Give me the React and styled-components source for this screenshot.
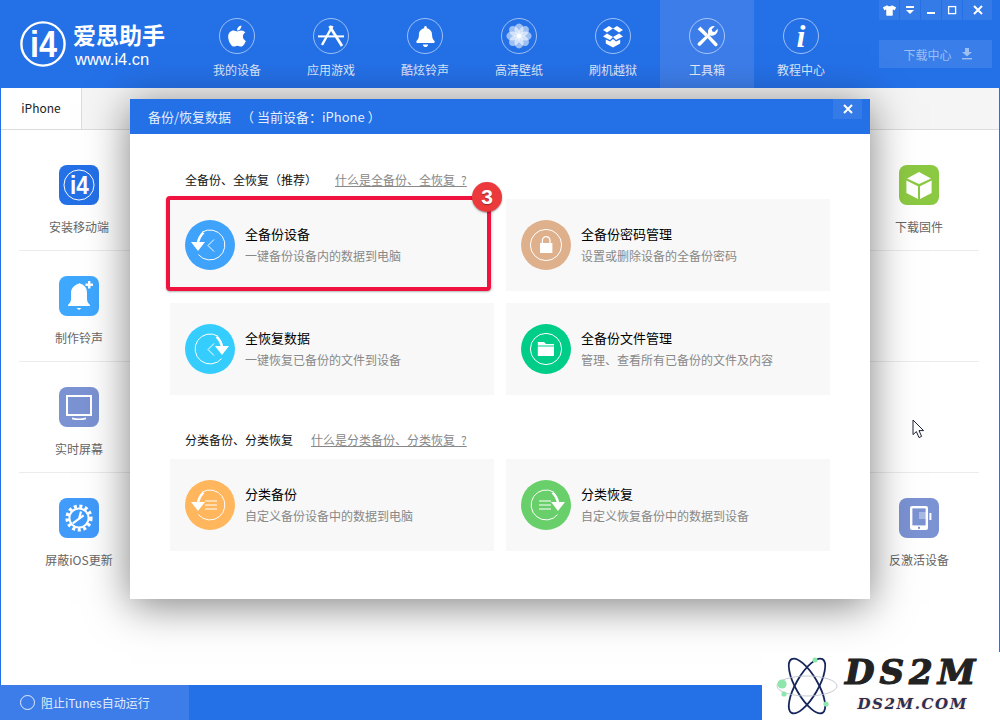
import React from 'react';
import styled, { createGlobalStyle } from 'styled-components';
import { FaApple, FaBell, FaTshirt } from 'react-icons/fa';

const BLUE = '#2470e7';
const LIGHT_BLUE = '#3d7de9';

const GlobalStyle = createGlobalStyle`
  html, body {
    margin: 0;
    padding: 0;
    background: #fff;
  }
  * {
    box-sizing: border-box;
  }
  body {
    font-family: "Noto Sans CJK SC", "Noto Sans", sans-serif;
  }
`;

// small drawings

const I4Mark = ({ size, ring = 2.4 }) => (
  <svg width={size} height={size} viewBox='0 0 46 46'>
    <circle cx='23' cy='23' r='21.6' fill='none' stroke='#fff' strokeWidth={ring} />
    <text
      x='10'
      y='36'
      textLength='27'
      lengthAdjust='spacingAndGlyphs'
      fill='#fff'
      fontFamily='Liberation Sans'
      fontWeight='700'
      fontSize='36'
    >
      i4
    </text>
  </svg>
);

const Flower = () => (
  <svg width='28' height='28' viewBox='0 0 32 32'>
    {[0, 45, 90, 135, 180, 225, 270, 315].map((a) => (
      <ellipse
        key={a}
        cx='16'
        cy='8.6'
        rx='5.2'
        ry='7'
        fill='#fff'
        opacity='0.55'
        transform={`rotate(${a} 16 16)`}
      />
    ))}
    <circle cx='16' cy='16' r='2.6' fill='#fff' />
  </svg>
);

const AppStoreA = () => (
  <svg width='34' height='34' viewBox='1 1 34 34' fill='none' stroke='#fff' strokeWidth='2.4'>
    <path d='M19.5 8 L9 27' />
    <path d='M16.5 8 L29 28' strokeWidth='2.8' />
    <path d='M5 18.4 H31' strokeWidth='2' />
  </svg>
);

const OpenBox = () => (
  <svg width='34' height='34' viewBox='1 1 34 34' fill='#fff'>
    <path d='M8 12 L14 8 L18 10.5 L12 14.5 Z' />
    <path d='M28 12 L22 8 L18 10.5 L24 14.5 Z' />
    <path d='M12 15.4 L18 19 L15 22 L8 18.6 Z' />
    <path d='M24 15.4 L18 19 L21 22 L28 18.6 Z' />
    <path d='M10.8 21.4 L15 23.6 L18 21 L21 23.6 L25.2 21.4 V25.4 L18 29.6 L10.8 25.4 Z' />
  </svg>
);

const Tools = () => (
  <svg width='23' height='23' viewBox='0 0 24 24' fill='#fff'>
    <path d='M4.6 1.6 L9 6 L12.4 9.4 L9.8 12 L6.3 8.5 L1.8 4.4 Z' />
    <path d='M12 13.6 L14.4 11.2 L22 19 A1.7 1.7 0 0 1 19.4 21.6 Z' />
    <path d='M22.6 4 A6 6 0 0 1 14.7 10.9 L5 21.2 A1.9 1.9 0 0 1 2.3 18.5 L12.8 8.9 A6 6 0 0 1 19.6 1.2 L16.4 4.4 L17 6.8 L19.4 7.4 Z' />
  </svg>
);

const BackupRing = ({ flip }) => (
  <g transform={flip ? 'matrix(-1 0 0 1 50 0)' : undefined}>
    <path d='M17 12.2 A15 15 0 1 1 13.4 34.6' fill='none' stroke='#fff' strokeWidth='1' />
    <path d='M13 23 C13.5 19 15 16 18.4 12.6' fill='none' stroke='#fff' strokeWidth='2.6' />
    <path d='M6 22 H20 L13 31 Z' fill='#fff' />
  </g>
);

const Chevron = () => (
  <path d='M29 19.5 L23 25.5 L29 31.5' fill='none' stroke='#fff' strokeWidth='1' />
);

const ListLines = () => (
  <path d='M20 21 H32 M20 25 H32 M20 29 H32' fill='none' stroke='#fff' strokeWidth='1' />
);

const ICONS = {
  backup: (
    <>
      <BackupRing />
      <Chevron />
    </>
  ),
  restore: (
    <>
      <BackupRing flip />
      <Chevron />
    </>
  ),
  partBackup: (
    <>
      <BackupRing />
      <ListLines />
    </>
  ),
  partRestore: (
    <>
      <BackupRing flip />
      <path d='M18 21 H30 M18 25 H30 M18 29 H30' fill='none' stroke='#fff' strokeWidth='1' />
    </>
  ),
  lock: (
    <>
      <circle cx='25' cy='25' r='15.6' fill='none' stroke='#fff' strokeWidth='1' />
      <rect x='19' y='23' width='12.4' height='10' fill='#fff' />
      <path d='M21.4 23 V20.4 A3.8 3.8 0 0 1 29 20.4 V23' fill='none' stroke='#fff' strokeWidth='1.3' />
    </>
  ),
  folder: (
    <>
      <circle cx='25' cy='25' r='15.6' fill='none' stroke='#fff' strokeWidth='1' />
      <path d='M16.8 18 H23 L25 20 H33 V21.6 H16.8 Z M16.8 22.6 H33 V32 H16.8 Z' fill='#fff' />
    </>
  ),
};

const TOOL_ICONS = {
  install: <I4Mark size={32} ring={1.4} />,
  bell: (
    <svg width='32' height='32' viewBox='0 0 32 32' fill='#fff'>
      <path d='M15 4 A2 2 0 0 1 18 4 C22.5 5.4 24 9 24 13 V19 C24 22 25.5 23.5 27 25 V26 H5 V25 C6.5 23.5 8 22 8 19 V13 C8 9 10.5 5.4 15 4 Z' />
      <path d='M13.5 28 H18.5 L16 30 Z' />
      <path d='M25 1 H27.4 V3.6 H30 V6 H27.4 V8.6 H25 V6 H22.4 V3.6 H25 Z' />
    </svg>
  ),
  screen: (
    <svg width='30' height='30' viewBox='0 0 30 30'>
      <rect x='3' y='4' width='24' height='19' fill='none' stroke='#fff' strokeWidth='2' />
      <path d='M8 26.4 C12 27.4 18 27.4 22 26.4' fill='none' stroke='#fff' strokeWidth='1.6' />
    </svg>
  ),
  gear: (
    <svg width='30' height='30' viewBox='0 0 30 30' fill='none' stroke='#fff'>
      <circle cx='15' cy='15' r='11.8' strokeWidth='3.6' strokeDasharray='3 2.56' />
      <circle cx='15' cy='15' r='9.6' strokeWidth='2' />
      <path d='M17 8.5 L15 16 M8.8 20.4 L19.6 12.4' strokeWidth='2.2' />
    </svg>
  ),
  cube: (
    <svg width='28' height='30' viewBox='0 0 28 30' fill='#fff'>
      <path d='M14 2 L26 8.4 L14 14 L2 8.4 Z' />
      <path d='M1.4 10.6 L13 16.2 V29 L1.4 23 Z' />
      <path d='M26.6 10.6 L15 16.2 V29 L26.6 23 Z' />
    </svg>
  ),
  phone: (
    <svg width='30' height='32' viewBox='0 0 30 32'>
      <rect x='6' y='4' width='18' height='24' rx='2' fill='#fff' />
      <rect x='8.4' y='6.4' width='13.2' height='17' fill='#7b92d3' />
      <rect x='15' y='10' width='7' height='7' fill='#fff' opacity='0.35' />
      <rect x='14' y='24.8' width='2' height='2' fill='#7b92d3' />
      <rect x='25.4' y='11' width='2' height='7' fill='#fff' />
    </svg>
  ),
};

const NAV_ITEMS = [
  { label: '我的设备', icon: <FaApple size={24} /> },
  { label: '应用游戏', icon: <AppStoreA /> },
  { label: '酷炫铃声', icon: <FaBell size={21} /> },
  { label: '高清壁纸', icon: <Flower /> },
  { label: '刷机越狱', icon: <OpenBox /> },
  { label: '工具箱', icon: <Tools />, active: true },
  { label: '教程中心', icon: <InfoGlyph>i</InfoGlyph> },
];

const TOOL_ROWS = [
  [
    { label: '安装移动端', icon: 'install', color: BLUE },
    { label: '下载固件', icon: 'cube', color: '#8cc942' },
  ],
  [{ label: '制作铃声', icon: 'bell', color: '#3ea8ff' }, null],
  [{ label: '实时屏幕', icon: 'screen', color: '#7b92d3' }, null],
  [
    { label: '屏蔽iOS更新', icon: 'gear', color: '#419bfb' },
    { label: '反激活设备', icon: 'phone', color: '#7b92d3' },
  ],
];

const FULL_CARDS = [
  { title: '全备份设备', desc: '一键备份设备内的数据到电脑', icon: 'backup', color: '#3fa2fb', marked: true },
  { title: '全备份密码管理', desc: '设置或删除设备的全备份密码', icon: 'lock', color: '#dfb08c' },
  { title: '全恢复数据', desc: '一键恢复已备份的文件到设备', icon: 'restore', color: '#35cdfd' },
  { title: '全备份文件管理', desc: '管理、查看所有已备份的文件及内容', icon: 'folder', color: '#00cd87' },
];

const PART_CARDS = [
  { title: '分类备份', desc: '自定义备份设备中的数据到电脑', icon: 'partBackup', color: '#ffb65c' },
  { title: '分类恢复', desc: '自定义恢复备份中的数据到设备', icon: 'partRestore', color: '#68cf6a' },
];

const BackupCard = ({ card }) => (
  <Card>
    <CardIcon $color={card.color}>
      <svg width='50' height='50' viewBox='0 0 50 50'>
        {ICONS[card.icon]}
      </svg>
    </CardIcon>
    <div>
      <CardTitle>{card.title}</CardTitle>
      <CardDesc>{card.desc}</CardDesc>
    </div>
    {card.marked && (
      <Highlight>
        <StepBadge>3</StepBadge>
      </Highlight>
    )}
  </Card>
);

const Tool = ({ tool }) =>
  tool ? (
    <ToolItem>
      <ToolIcon $color={tool.color}>{TOOL_ICONS[tool.icon]}</ToolIcon>
      <ToolLabel>{tool.label}</ToolLabel>
    </ToolItem>
  ) : (
    <ToolItem />
  );

const App = () => (
  <>
    <GlobalStyle />
    <Window>
      <Header>
        <Logo>
          <I4Mark size={46} />
          <LogoText>
            <LogoName>爱思助手</LogoName>
            <LogoUrl>www.i4.cn</LogoUrl>
          </LogoText>
        </Logo>
        <Nav>
          {NAV_ITEMS.map((item) => (
            <NavItem key={item.label} $active={item.active}>
              <NavCircle>{item.icon}</NavCircle>
              <NavLabel>{item.label}</NavLabel>
            </NavItem>
          ))}
        </Nav>
        <HeaderRight>
          <WindowButtons>
            <WindowButton>
              <FaTshirt size={13} />
            </WindowButton>
            <WindowButton>
              <svg width='10' height='10' viewBox='0 0 10 10' fill='#fff'>
                <rect x='1' y='1' width='8' height='2' />
                <path d='M1 5 H9 L5 9 Z' />
              </svg>
            </WindowButton>
            <WindowButton>
              <svg width='10' height='10' viewBox='0 0 10 10' fill='#fff'>
                <rect x='1' y='7' width='8' height='2' />
              </svg>
            </WindowButton>
            <WindowButton>
              <svg width='10' height='10' viewBox='0 0 10 10' fill='none' stroke='#fff' strokeWidth='1.3'>
                <rect x='1.6' y='1.6' width='7' height='7' />
              </svg>
            </WindowButton>
            <WindowButton $wide>
              <CloseCross />
            </WindowButton>
          </WindowButtons>
          <DownloadButton>
            下载中心
            <svg width='12' height='12' viewBox='0 0 12 12' fill='currentColor'>
              <path d='M4 0 H8 V4 H11 L6 8.6 L1 4 H4 Z' />
              <rect x='1' y='10' width='10' height='1.4' />
            </svg>
          </DownloadButton>
        </HeaderRight>
      </Header>

      <Main>
        <TabBar>
          <Tab>iPhone</Tab>
        </TabBar>
        <ToolBody>
          {TOOL_ROWS.map((row) => (
            <ToolRow key={row[0].label}>
              <Tool tool={row[0]} />
              <Tool tool={row[1]} />
            </ToolRow>
          ))}
        </ToolBody>
      </Main>

      <Footer>
        <FooterToggle>
          <FooterCircle />
          阻止iTunes自动运行
        </FooterToggle>
      </Footer>

      <Modal>
        <ModalHeader>
          备份/恢复数据
          <ModalDevice>（ 当前设备：iPhone ）</ModalDevice>
          <ModalClose>
            <CloseCross />
          </ModalClose>
        </ModalHeader>
        <ModalBody>
          <SectionHead>
            <SectionTitle>全备份、全恢复（推荐）</SectionTitle>
            <SectionLink>什么是全备份、全恢复{'\u2002'}?</SectionLink>
          </SectionHead>
          <CardGrid>
            {FULL_CARDS.map((card) => (
              <BackupCard key={card.title} card={card} />
            ))}
          </CardGrid>
          <SectionHead $second>
            <SectionTitle>分类备份、分类恢复</SectionTitle>
            <SectionLink>什么是分类备份、分类恢复{'\u2002'}?</SectionLink>
          </SectionHead>
          <CardGrid>
            {PART_CARDS.map((card) => (
              <BackupCard key={card.title} card={card} />
            ))}
          </CardGrid>
        </ModalBody>
      </Modal>

      <Pointer width='14' height='20' viewBox='0 0 14 20'>
        <path
          d='M1 1 V15.6 L4.4 12.6 L7 18.6 L9.6 17.4 L7 11.6 H11.6 Z'
          fill='#fff'
          stroke='#1d2233'
          strokeWidth='1'
        />
      </Pointer>

      <Watermark>
        <svg width='66' height='66' viewBox='0 0 66 66' fill='none'>
          <g stroke='#16265c' strokeWidth='1.8'>
            <ellipse cx='33' cy='33' rx='31' ry='11' transform='rotate(60 33 33)' />
            <ellipse cx='33' cy='33' rx='31' ry='11' transform='rotate(-60 33 33)' />
          </g>
          <ellipse cx='33' cy='33' rx='30' ry='10' stroke='#b8bcc8' strokeWidth='0.8' />
          <circle cx='8' cy='31' r='4.6' fill='#8fe6ac' />
          <circle cx='41' cy='7' r='2.6' fill='#8fe6ac' />
          <circle cx='10' cy='41' r='2.6' fill='#8fe6ac' />
          <circle cx='52' cy='51' r='2.6' fill='#8fe6ac' />
        </svg>
        <WatermarkText>
          <WatermarkName>DS2M</WatermarkName>
          <WatermarkUrl>DS2M.COM</WatermarkUrl>
        </WatermarkText>
      </Watermark>
    </Window>
  </>
);

function InfoGlyph({ children }) {
  return <InfoText>{children}</InfoText>;
}

function CloseCross() {
  return (
    <svg width='10' height='10' viewBox='0 0 10 10' fill='none' stroke='#fff' strokeWidth='2'>
      <path d='M1 1 L9 9 M9 1 L1 9' />
    </svg>
  );
}

const Window = styled.div`
  position: relative;
  display: flex;
  flex-direction: column;
  width: 1000px;
  height: 720px;
  overflow: hidden;
  background: #fff;
`;

const Header = styled.header`
  display: flex;
  flex: 0 0 88px;
  background: ${BLUE};
  color: #fff;
`;

const Logo = styled.div`
  display: flex;
  flex: 0 0 190px;
  align-items: center;
  gap: 7px;
  padding: 0 0 0 20px;
`;

const LogoText = styled.div`
  display: flex;
  flex-direction: column;
  gap: 3px;
`;

const LogoName = styled.div`
  font-size: 23px;
  font-weight: 700;
  line-height: 26px;
  white-space: nowrap;
`;

const LogoUrl = styled.div`
  font-family: "Liberation Sans", sans-serif;
  font-size: 16.5px;
  line-height: 18px;
  padding-left: 2px;
`;

const Nav = styled.nav`
  display: flex;
`;

const NavItem = styled.div`
  display: flex;
  flex-direction: column;
  align-items: center;
  width: 94px;
  padding-top: 18px;
  background: ${(p) => (p.$active ? LIGHT_BLUE : 'transparent')};
`;

const NavCircle = styled.div`
  display: flex;
  align-items: center;
  justify-content: center;
  width: 36px;
  height: 36px;
  border: 1px solid rgba(255, 255, 255, 0.55);
  border-radius: 50%;
`;

const InfoText = styled.span`
  font-family: "Liberation Serif", serif;
  font-size: 32px;
  font-style: italic;
  font-weight: 700;
  line-height: 32px;
`;

const NavLabel = styled.div`
  margin-top: 7px;
  font-size: 12px;
  line-height: 18px;
  color: rgba(255, 255, 255, 0.85);
`;

const HeaderRight = styled.div`
  display: flex;
  flex-direction: column;
  margin-left: 31px;
  width: 113px;
`;

const WindowButtons = styled.div`
  display: flex;
  gap: 1px;
`;

const WindowButton = styled.div`
  display: flex;
  align-items: center;
  justify-content: center;
  width: ${(p) => (p.$wide ? '29px' : '20px')};
  height: 20px;
  background: rgba(255, 255, 255, 0.08);
`;

const DownloadButton = styled.div`
  display: flex;
  align-items: center;
  justify-content: center;
  gap: 9px;
  height: 28px;
  margin-top: 20px;
  padding-left: 5px;
  font-size: 12px;
  color: rgba(255, 255, 255, 0.5);
  background: rgba(255, 255, 255, 0.1);
`;

const Main = styled.main`
  display: flex;
  flex: 1;
  flex-direction: column;
  border-left: 1px solid ${BLUE};
  border-right: 1px solid ${BLUE};
`;

const TabBar = styled.div`
  display: flex;
  flex: 0 0 41px;
  background: #f5f5f5;
  border-bottom: 1px solid #dcdcdc;
`;

const Tab = styled.div`
  width: 81px;
  height: 41px;
  font-size: 12px;
  line-height: 40px;
  text-align: center;
  color: #222;
  background: #fff;
  border-right: 1px solid #dcdcdc;
`;

const ToolBody = styled.div`
  display: flex;
  flex-direction: column;
  padding: 10px 20px 0 18px;
`;

const ToolRow = styled.div`
  display: flex;
  justify-content: space-between;
  height: 111px;
  padding-top: 25px;
  border-bottom: 1px solid #ececec;

  &:last-child {
    border-bottom: none;
  }
`;

const ToolItem = styled.div`
  display: flex;
  flex-direction: column;
  align-items: center;
  width: 120px;
`;

const ToolIcon = styled.div`
  display: flex;
  align-items: center;
  justify-content: center;
  width: 40px;
  height: 40px;
  border-radius: 8px;
  background: ${(p) => p.$color};
`;

const ToolLabel = styled.div`
  margin-top: 12px;
  font-size: 12px;
  line-height: 20px;
  color: #666;
`;

const Footer = styled.footer`
  display: flex;
  flex: 0 0 35px;
  background: ${BLUE};
`;

const FooterToggle = styled.div`
  display: flex;
  align-items: center;
  gap: 6px;
  width: 189px;
  padding-left: 20px;
  font-size: 12px;
  color: rgba(255, 255, 255, 0.88);
  background: ${LIGHT_BLUE};
`;

const FooterCircle = styled.span`
  width: 15px;
  height: 15px;
  border: 1px solid rgba(255, 255, 255, 0.85);
  border-radius: 50%;
`;

const Modal = styled.section`
  position: absolute;
  top: 99px;
  left: 130px;
  width: 740px;
  background: #fff;
  box-shadow: 0 6px 40px rgba(0, 0, 0, 0.5);
`;

const ModalHeader = styled.div`
  position: relative;
  display: flex;
  align-items: center;
  height: 35px;
  padding-left: 18px;
  font-size: 13px;
  color: rgba(255, 255, 255, 0.9);
  background: ${BLUE};
`;

const ModalDevice = styled.span`
  margin-left: 10px;
`;

const ModalClose = styled.div`
  position: absolute;
  top: 0;
  right: 8px;
  display: flex;
  align-items: center;
  justify-content: center;
  width: 29px;
  height: 20px;
  background: rgba(255, 255, 255, 0.08);
`;

const ModalBody = styled.div`
  padding: 36px 40px 48px;
`;

const SectionHead = styled.div`
  display: flex;
  gap: 18px;
  height: 20px;
  margin-top: ${(p) => (p.$second ? '35px' : '0')};
  margin-bottom: 9px;
  padding-left: 15px;
  font-size: 12px;
  line-height: 20px;
`;

const SectionTitle = styled.span`
  color: #111;
`;

const SectionLink = styled.span`
  color: #888;
  text-decoration: underline;
`;

const CardGrid = styled.div`
  display: grid;
  grid-template-columns: 324px 324px;
  grid-auto-rows: 92px;
  gap: 12px;
`;

const Card = styled.div`
  position: relative;
  display: flex;
  align-items: center;
  gap: 10px;
  padding-left: 15px;
  background: #f8f8f8;
`;

const CardIcon = styled.div`
  flex: 0 0 50px;
  height: 50px;
  border-radius: 50%;
  background: ${(p) => p.$color};

  svg {
    display: block;
  }
`;

const CardTitle = styled.div`
  font-size: 13px;
  line-height: 20px;
  color: #000;
`;

const CardDesc = styled.div`
  margin-top: 2px;
  font-size: 12px;
  line-height: 20px;
  color: #888;
`;

const Highlight = styled.div`
  position: absolute;
  top: -3px;
  left: -4px;
  right: 3px;
  bottom: 0;
  border: 4px solid #f0123f;
  border-radius: 4px;
  box-shadow: 0 1px 2px rgba(0, 0, 0, 0.3);
`;

const StepBadge = styled.div`
  position: absolute;
  top: -18px;
  right: -15px;
  width: 30px;
  height: 30px;
  font-family: "Liberation Sans", sans-serif;
  font-size: 21px;
  font-weight: 700;
  line-height: 30px;
  text-align: center;
  color: #fff;
  border-radius: 50%;
  background: #ec3a3c;
  box-shadow: 0 1px 2px rgba(0, 0, 0, 0.4);
  text-shadow: 0 1px 1px rgba(0, 0, 0, 0.35);
`;

const Pointer = styled.svg`
  position: absolute;
  top: 419px;
  left: 912px;
`;

const Watermark = styled.div`
  position: absolute;
  top: 652px;
  left: 762px;
  display: flex;
  width: 238px;
  height: 68px;
  padding: 1px 0 0 12px;
  background: #fff;
`;

const WatermarkText = styled.div`
  display: flex;
  flex-direction: column;
  align-items: center;
  margin-left: 5px;
`;

const WatermarkName = styled.div`
  font-family: "DejaVu Serif", serif;
  font-size: 34px;
  font-style: italic;
  font-weight: 700;
  line-height: 38px;
  letter-spacing: 5px;
  color: #222;
  -webkit-text-stroke: 1.2px #222;
`;

const WatermarkUrl = styled.div`
  margin-top: 3px;
  font-family: "DejaVu Serif", serif;
  font-size: 15px;
  font-style: italic;
  font-weight: 700;
  line-height: 20px;
  letter-spacing: 1.6px;
  color: #2b2f55;
  text-shadow: 0 0 2px #f2c9a8;
`;

export default App;
